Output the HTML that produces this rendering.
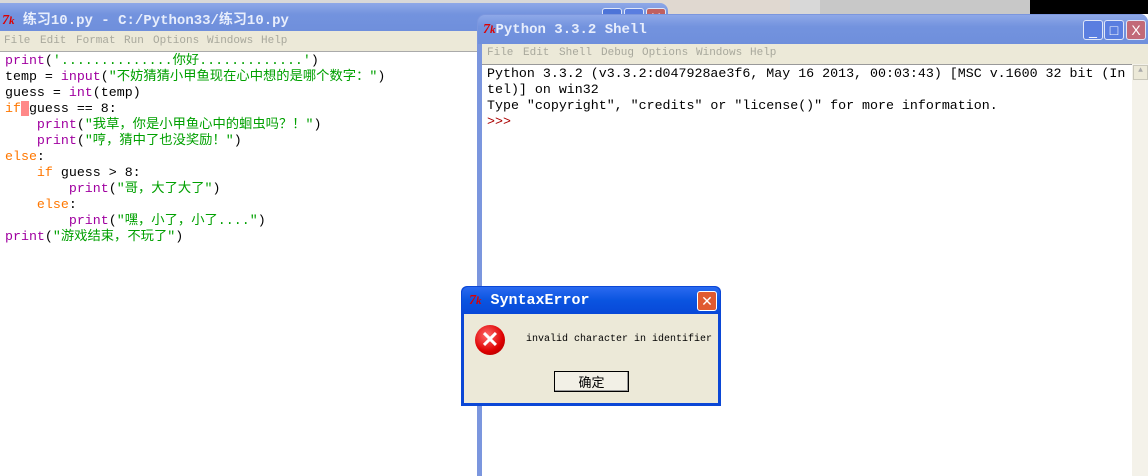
<!DOCTYPE html>
<html><head><meta charset="utf-8"><style>
*{margin:0;padding:0;box-sizing:border-box}
body{width:1148px;height:476px;overflow:hidden;background:#fff;position:relative;font-family:"Liberation Mono","Noto Sans CJK SC",monospace}
.abs{position:absolute}
.title{background:linear-gradient(#8ea8e8,#7393de 40%,#6f8fdc);color:#e8eefc;font-weight:bold;font-size:14px;font-family:"Liberation Mono","Noto Sans CJK SC",monospace}
.menu{background:#ece9d8;color:#a8a89c;font-size:11px;font-family:"Liberation Mono","DejaVu Sans Mono",monospace}
.menu span{position:absolute;top:4px}
.code{font-size:13.3px;line-height:16px;white-space:pre;color:#000}
.p{color:#a000a0}.s{color:#00a000}.k{color:#ff7700}.r{color:#a00}
.tk{color:#d00;font-style:italic;font-family:"Liberation Serif",serif;font-weight:bold;font-size:14px}
.btn{position:absolute;width:20px;height:20px;border:1px solid #dfe6f8;border-radius:3px;background:#5a7ee0;color:#fff;font-size:14px;text-align:center;line-height:18px;font-family:"Liberation Sans",sans-serif}
</style></head><body>
<div class="abs" style="left:0;top:0;width:1148px;height:14px;background:#d8d8d8"></div>
<div class="abs" style="left:820px;top:0;width:210px;height:14px;background:#c8c8c8"></div>
<div class="abs" style="left:1030px;top:0;width:118px;height:14px;background:#000"></div>
<div class="abs" style="left:660px;top:0;width:130px;height:14px;background:#e0d8d0"></div>

<div class="abs title" style="left:0;top:3px;width:668px;height:28px;border-radius:0 8px 0 0"></div>
<div class="abs title" style="left:0;top:3px;width:478px;height:28px;padding:6px 0 0 2px"><span class="tk">7</span><span class="tk" style="font-size:11px">k</span> 练习10.py - C:/Python33/练习10.py</div>
<div class="btn" style="left:602px;top:8px;background:#4d74d8"></div>
<div class="btn" style="left:624px;top:8px;">▬</div>
<div class="btn" style="left:646px;top:8px;background:#c06060">X</div>
<div class="abs menu" style="left:0;top:31px;width:478px;height:21px"><span style="left:4px">File</span><span style="left:40px">Edit</span><span style="left:76px">Format</span><span style="left:124px">Run</span><span style="left:153px">Options</span><span style="left:207px">Windows</span><span style="left:261px">Help</span></div>
<div class="abs" style="left:0;top:51px;width:478px;height:1px;background:#aaa"></div>
<div class="abs code" style="left:5px;top:53px"><span class="p">print</span>(<span class="s">'..............你好.............'</span>)
temp = <span class="p">input</span>(<span class="s">"不妨猜猜小甲鱼现在心中想的是哪个数字："</span>)
guess = <span class="p">int</span>(temp)
<span class="k">if</span><span style="background:#f88"> </span>guess == 8:
    <span class="p">print</span>(<span class="s">"我草，你是小甲鱼心中的蛔虫吗？！"</span>)
    <span class="p">print</span>(<span class="s">"哼，猜中了也没奖励！"</span>)
<span class="k">else</span>:
    <span class="k">if</span> guess &gt; 8:
        <span class="p">print</span>(<span class="s">"哥，大了大了"</span>)
    <span class="k">else</span>:
        <span class="p">print</span>(<span class="s">"嘿，小了，小了...."</span>)
<span class="p">print</span>(<span class="s">"游戏结束，不玩了"</span>)</div>

<div class="abs" style="left:477px;top:14px;width:671px;height:462px;background:#7b96de;border-radius:8px 8px 0 0"></div>
<div class="abs title" style="left:478px;top:15px;width:670px;height:29px;padding:7px 0 0 5px;border-radius:7px 7px 0 0"><span class="tk">7</span><span class="tk" style="font-size:11px">k</span>Python 3.3.2 Shell</div>
<div class="btn" style="left:1083px;top:20px;">_</div>
<div class="btn" style="left:1104px;top:20px;">□</div>
<div class="btn" style="left:1126px;top:20px;background:#c26a78">X</div>
<div class="abs menu" style="left:482px;top:44px;width:666px;height:20px"><span style="left:5px;top:3px">File</span><span style="left:41px;top:3px">Edit</span><span style="left:77px;top:3px">Shell</span><span style="left:119px;top:3px">Debug</span><span style="left:160px;top:3px">Options</span><span style="left:214px;top:3px">Windows</span><span style="left:268px;top:3px">Help</span></div>
<div class="abs" style="left:482px;top:64px;width:650px;height:412px;background:#fff;border-top:1px solid #999"></div>
<div class="abs code" style="left:487px;top:66px">Python 3.3.2 (v3.3.2:d047928ae3f6, May 16 2013, 00:03:43) [MSC v.1600 32 bit (In
tel)] on win32
Type "copyright", "credits" or "license()" for more information.
<span class="r">&gt;&gt;&gt;</span></div>
<div class="abs" style="left:1132px;top:64px;width:16px;height:412px;background:#f4f2ea"></div>
<div class="abs" style="left:1133px;top:65px;width:15px;height:15px;background:#ece9d8;border:1px solid #c9c7ba;color:#aaa;font-size:8px;text-align:center">▲</div>

<div class="abs" style="left:461px;top:286px;width:260px;height:120px;background:#0b47d6;border-radius:6px 6px 0 0"></div>
<div class="abs title" style="left:462px;top:287px;width:258px;height:27px;padding:5px 0 0 7px;background:linear-gradient(#2a6af0,#0a54e0 50%,#0848d8);color:#fff;border-radius:6px 6px 0 0;font-size:15px"><span class="tk">7</span><span class="tk" style="font-size:11px">k</span> SyntaxError</div>
<div class="btn" style="left:697px;top:291px;width:20px;height:20px;background:#e05a30;border-color:#fff">✕</div>
<div class="abs" style="left:464px;top:314px;width:254px;height:89px;background:#ece9d8"></div>
<div class="abs" style="left:475px;top:325px;width:30px;height:30px;border-radius:50%;background:radial-gradient(circle at 40% 35%,#ff6a6a,#d00 60%,#900);color:#fff;font:bold 22px/30px 'Liberation Sans',sans-serif;text-align:center">✕</div>
<div class="abs" style="left:526px;top:334px;font-size:10px;color:#000;font-family:'Liberation Mono',monospace">invalid character in identifier</div>
<div class="abs" style="left:554px;top:371px;width:75px;height:21px;border:1px solid #000;background:#f2f0e6;box-shadow:inset -1px -1px #999;font:13px/19px 'Noto Sans CJK SC',sans-serif;text-align:center">确定</div>
</body></html>
